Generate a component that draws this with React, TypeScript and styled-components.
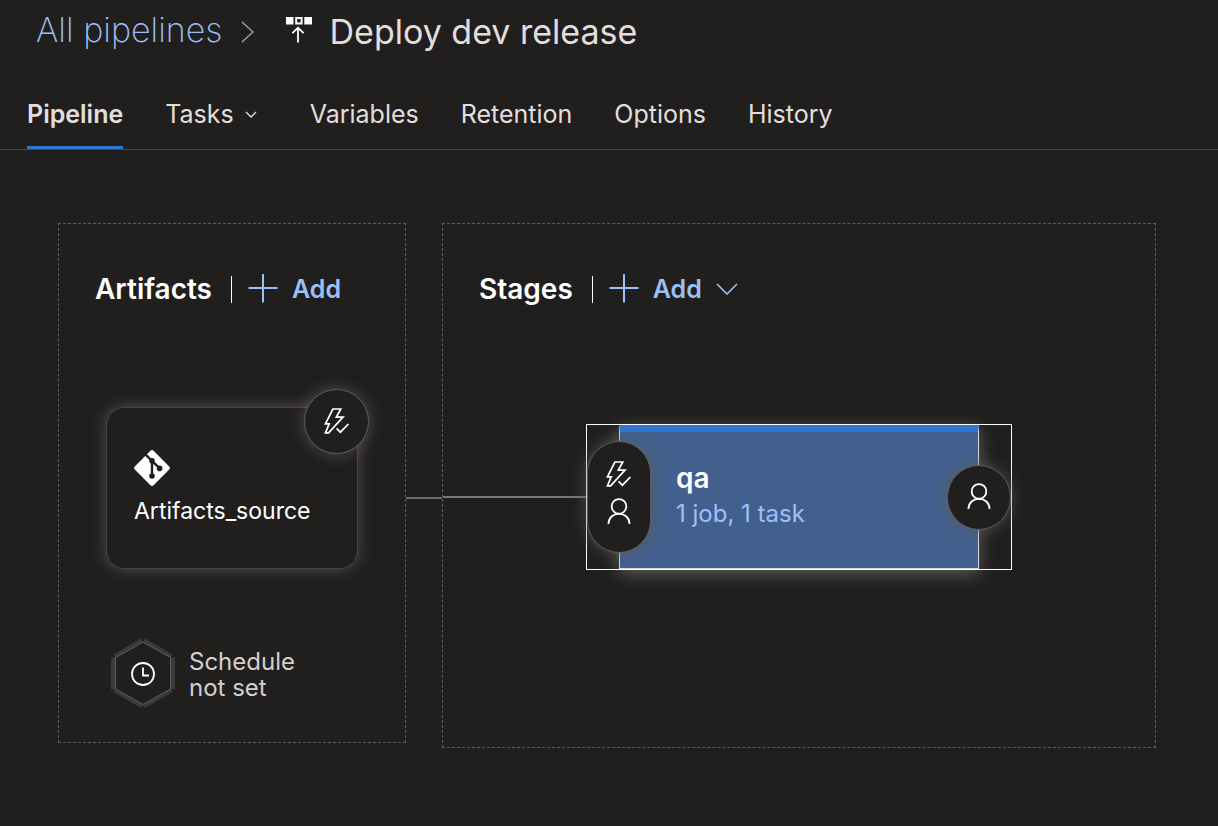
import React from "react";
import styled, { createGlobalStyle } from "styled-components";

const color = {
  bg: "#211f1e",
  text: "#e1dfdd",
  white: "#ffffff",
  link: "#9dbff9",
  accent: "#3177d0",
  rule: "#4a4847",
  dash: "#605e5c",
  stage: "#42608e",
};

const GlobalStyle = createGlobalStyle`
  *, *::before, *::after { box-sizing: border-box; }
  body {
    margin: 0;
    background: ${color.bg};
    color: ${color.text};
    font-family: Inter, "Liberation Sans", sans-serif;
  }
  button { font: inherit; color: inherit; background: none; border: 0; padding: 0; cursor: pointer; }
  h1, h2, h3, p { margin: 0; }
  svg { display: block; flex: none; }
`;

const Page = styled.main`
  min-height: 100vh;
`;

const Breadcrumb = styled.header`
  display: flex;
  align-items: center;
  height: 64px;
  padding-left: 36px;
  white-space: nowrap;
`;

const CrumbLink = styled.a`
  color: ${color.link};
  font-size: 34px;
  font-weight: 200;
  line-height: 44px;
  padding-bottom: 4px;
  text-decoration: none;
`;

const CrumbArrow = styled.svg`
  margin: 0 32px 0 18px;
`;

const Title = styled.h1`
  margin-left: 18px;
  font-size: 34px;
  font-weight: 400;
  line-height: 44px;
`;

const Tabs = styled.nav`
  display: flex;
  gap: 42px;
  height: 86px;
  padding-left: 27px;
  border-bottom: 1px solid ${color.rule};
`;

const Tab = styled.button<{ $active?: boolean; $menu?: boolean }>`
  display: flex;
  align-items: center;
  gap: 11px;
  padding: 18px ${(p) => (p.$menu ? "11px" : "0")} 0 0;
  font-size: 25px;
  font-weight: ${(p) => (p.$active ? 600 : 400)};
  border-bottom: 3px solid ${(p) => (p.$active ? color.accent : "transparent")};
`;

const Canvas = styled.div`
  display: flex;
  align-items: flex-start;
  padding: 73px 62px 72px 58px;
`;

const Panel = styled.section<{ $grow?: boolean }>`
  flex: ${(p) => (p.$grow ? "1" : "0 0 348px")};
  min-width: 0;
  border: 1px dashed ${color.dash};
  padding-top: 44px;
`;

const Link = styled.div`
  flex: 0 0 36px;
  height: 2px;
  margin-top: 274px;
  background: #6f6d6b;
`;

const PanelHead = styled.div`
  display: flex;
  align-items: center;
  height: 42px;
  padding-left: 36px;
  white-space: nowrap;
`;

const PanelTitle = styled.h2`
  color: ${color.white};
  font-size: 28px;
  font-weight: 600;
  line-height: 42px;
`;

const Divider = styled.span`
  width: 1px;
  height: 27px;
  margin: 0 16px 0 19px;
  background: ${color.white};
`;

const AddButton = styled.button`
  display: flex;
  align-items: center;
  gap: 14px;
  color: ${color.link};
  font-size: 25px;
  font-weight: 600;
  line-height: 42px;
`;

const glow = "0 0 16px rgba(96, 93, 90, 0.75)";

const ArtifactCard = styled.article`
  position: relative;
  width: 252px;
  height: 162px;
  margin: 97px 0 0 47px;
  padding: 42px 0 0 27px;
  border: 1px solid #484644;
  border-radius: 18px;
  background: ${color.bg};
  box-shadow: ${glow};
`;

const ArtifactName = styled.h3`
  margin-top: 8px;
  color: ${color.white};
  font-size: 23px;
  font-weight: 400;
  line-height: 34px;
`;

const Round = styled.button`
  position: absolute;
  display: flex;
  flex-direction: column;
  align-items: center;
  justify-content: center;
  width: 65px;
  border: 1px solid ${color.dash};
  border-radius: 33px;
  background: ${color.bg};
  color: ${color.white};
  box-shadow: ${glow};
`;

const TriggerBadge = styled(Round)`
  top: -19px;
  right: -12px;
  height: 65px;
  padding-bottom: 2px;
`;

const PreDeploy = styled(Round)`
  left: 0;
  top: 16px;
  height: 112px;
  width: 64px;
  gap: 11px;
  padding-bottom: 8px;
`;

const PostDeploy = styled(Round)`
  right: 0;
  top: 40px;
  width: 64px;
  height: 65px;
  padding-bottom: 2px;
`;

const Schedule = styled.button`
  display: flex;
  align-items: center;
  gap: 14px;
  margin: 69px 0 34px 52px;
  color: #d2d0ce;
  font-size: 24px;
  line-height: 26px;
  text-align: left;
`;

const ScheduleText = styled.span`
  padding-top: 4px;
`;

const StageRow = styled.div`
  display: flex;
  align-items: center;
  padding: 114px 143px 177px 0;
`;

const StageLine = styled.div`
  flex: 1;
  height: 2px;
  background: #7a7876;
`;

const StageNode = styled.article`
  position: relative;
  flex: 0 1 426px;
  height: 146px;
  padding: 0 32px;
  border: 1px solid ${color.white};
`;

const StageBody = styled.div`
  height: 100%;
  padding: 32px 0 0 56px;
  border: 1px solid #d6dae0;
  border-top: 7px solid ${color.accent};
  background: ${color.stage};
  box-shadow: 0 4px 16px rgba(255, 255, 255, 0.3);
`;

const StageName = styled.h3`
  color: ${color.white};
  font-size: 28px;
  font-weight: 600;
  line-height: 28px;
`;

const StageInfo = styled.a`
  display: block;
  margin-top: 8px;
  color: ${color.link};
  font-size: 24px;
  line-height: 28px;
  text-decoration: none;
`;

const Plus = () => (
  <svg width="30" height="30" viewBox="0 0 30 30" stroke="currentColor" strokeWidth="2" aria-hidden="true">
    <path d="M0.5 14H29.5M15 0V28.5" />
  </svg>
);

const Chevron = ({ w, h, sw }: { w: number; h: number; sw: number }) => (
  <svg width={w} height={h} fill="none" stroke="currentColor" strokeWidth={sw} aria-hidden="true">
    <path d={`M1 1L${w / 2} ${h - 1}L${w - 1} 1`} />
  </svg>
);

const ReleaseIcon = () => (
  <svg width="26" height="30" viewBox="0 0 26 30" aria-hidden="true">
    <path fill="#fff" d="M0 0H7.5V7.5H0ZM18.3 0H26V7.5H18.3Z" />
    <path fill="none" stroke="#fff" strokeWidth="2" d="M10.2 1H15.6V6.4H10.2Z" />
    <path fill="none" stroke="#fff" strokeWidth="1.8" d="M12 25.6V11M6.4 16.2L12 10.8L17.6 16.2" />
  </svg>
);

const TriggerIcon = () => (
  <svg width="26" height="26" viewBox="0 0 26 26" fill="none" stroke="currentColor" strokeWidth="1.7" aria-hidden="true">
    <path d="M8.9 1H16.8L12.3 9.2H19L4.6 24.8H1.4L5.2 15.8H1.4Z" />
    <path d="M12.6 20.3L16.4 24.2L24.4 16" />
  </svg>
);

const PersonIcon = () => (
  <svg width="24" height="27" viewBox="0 0 24 27" fill="none" stroke="currentColor" strokeWidth="1.8" aria-hidden="true">
    <circle cx="12" cy="8.4" r="7.3" />
    <path d="M1.4 26C1.6 19.6 6.2 15.8 12 15.8S22.4 19.6 22.6 26" />
  </svg>
);

const GitIcon = () => (
  <svg width="36" height="36" viewBox="0 0 36 36" aria-hidden="true">
    <path
      fill="#fff"
      d="M16.4 0.8Q18 -0.6 19.6 0.8L35.2 16.4Q36.6 18 35.2 19.6L19.6 35.2Q18 36.6 16.4 35.2L0.8 19.6Q-0.6 18 0.8 16.4Z"
    />
    <path fill="none" stroke={color.bg} strokeWidth="2.4" d="M11.4 4.4L25.6 18.4M18 11V26" />
    <circle cx="18" cy="10.8" r="2.8" fill={color.bg} />
    <circle cx="25.6" cy="18.4" r="2.8" fill={color.bg} />
    <circle cx="18" cy="26" r="2.8" fill={color.bg} />
  </svg>
);

const ScheduleIcon = () => (
  <svg width="64" height="70" viewBox="0 0 64 70" fill="none" aria-hidden="true">
    <path
      stroke="#3b3a39"
      strokeWidth="4"
      d="M33 2.2L60.6 18.2M62 19.5V51.5M60.6 52.2L33 68.2M31 68.2L3.4 52.2M2 51.5V19.5M3.4 18.2L31 2.2"
    />
    <path stroke="#605e5c" d="M32 4.2L59.6 19.5V51L32 66.5L4.6 51V19.5Z" />
    <circle cx="32" cy="36" r="11" stroke="#fff" strokeWidth="1.8" />
    <path stroke="#fff" strokeWidth="1.8" d="M32 29.5V37.5H38" />
  </svg>
);

const tabs = ["Pipeline", "Tasks", "Variables", "Retention", "Options", "History"];

export default function App() {
  return (
    <>
      <GlobalStyle />
      <Page>
        <Breadcrumb>
          <CrumbLink href="#pipelines">All pipelines</CrumbLink>
          <CrumbArrow width="13" height="22" viewBox="0 0 13 22" fill="none" stroke="#a19f9d" strokeWidth="1.5" aria-hidden="true">
            <path d="M1 1L12 11L1 21" />
          </CrumbArrow>
          <ReleaseIcon />
          <Title>Deploy dev release</Title>
        </Breadcrumb>
        <Tabs aria-label="Release sections">
          {tabs.map((name) => (
            <Tab key={name} $active={name === "Pipeline"} $menu={name === "Tasks"}>
              {name}
              {name === "Tasks" && <Chevron w={12} h={7} sw={1.3} />}
            </Tab>
          ))}
        </Tabs>
        <Canvas>
          <Panel>
            <PanelHead>
              <PanelTitle>Artifacts</PanelTitle>
              <Divider />
              <AddButton>
                <Plus />
                Add
              </AddButton>
            </PanelHead>
            <ArtifactCard>
              <GitIcon />
              <ArtifactName>Artifacts_source</ArtifactName>
              <TriggerBadge aria-label="Continuous deployment trigger">
                <TriggerIcon />
              </TriggerBadge>
            </ArtifactCard>
            <Schedule>
              <ScheduleIcon />
              <ScheduleText>
                Schedule
                <br />
                not set
              </ScheduleText>
            </Schedule>
          </Panel>
          <Link />
          <Panel $grow>
            <PanelHead>
              <PanelTitle>Stages</PanelTitle>
              <Divider />
              <AddButton>
                <Plus />
                Add
                <Chevron w={22} h={12} sw={1.6} />
              </AddButton>
            </PanelHead>
            <StageRow>
              <StageLine />
              <StageNode>
                <StageBody>
                  <StageName>qa</StageName>
                  <StageInfo href="#tasks">1 job, 1 task</StageInfo>
                </StageBody>
                <PreDeploy aria-label="Pre-deployment conditions">
                  <TriggerIcon />
                  <PersonIcon />
                </PreDeploy>
                <PostDeploy aria-label="Post-deployment conditions">
                  <PersonIcon />
                </PostDeploy>
              </StageNode>
            </StageRow>
          </Panel>
        </Canvas>
      </Page>
    </>
  );
}
